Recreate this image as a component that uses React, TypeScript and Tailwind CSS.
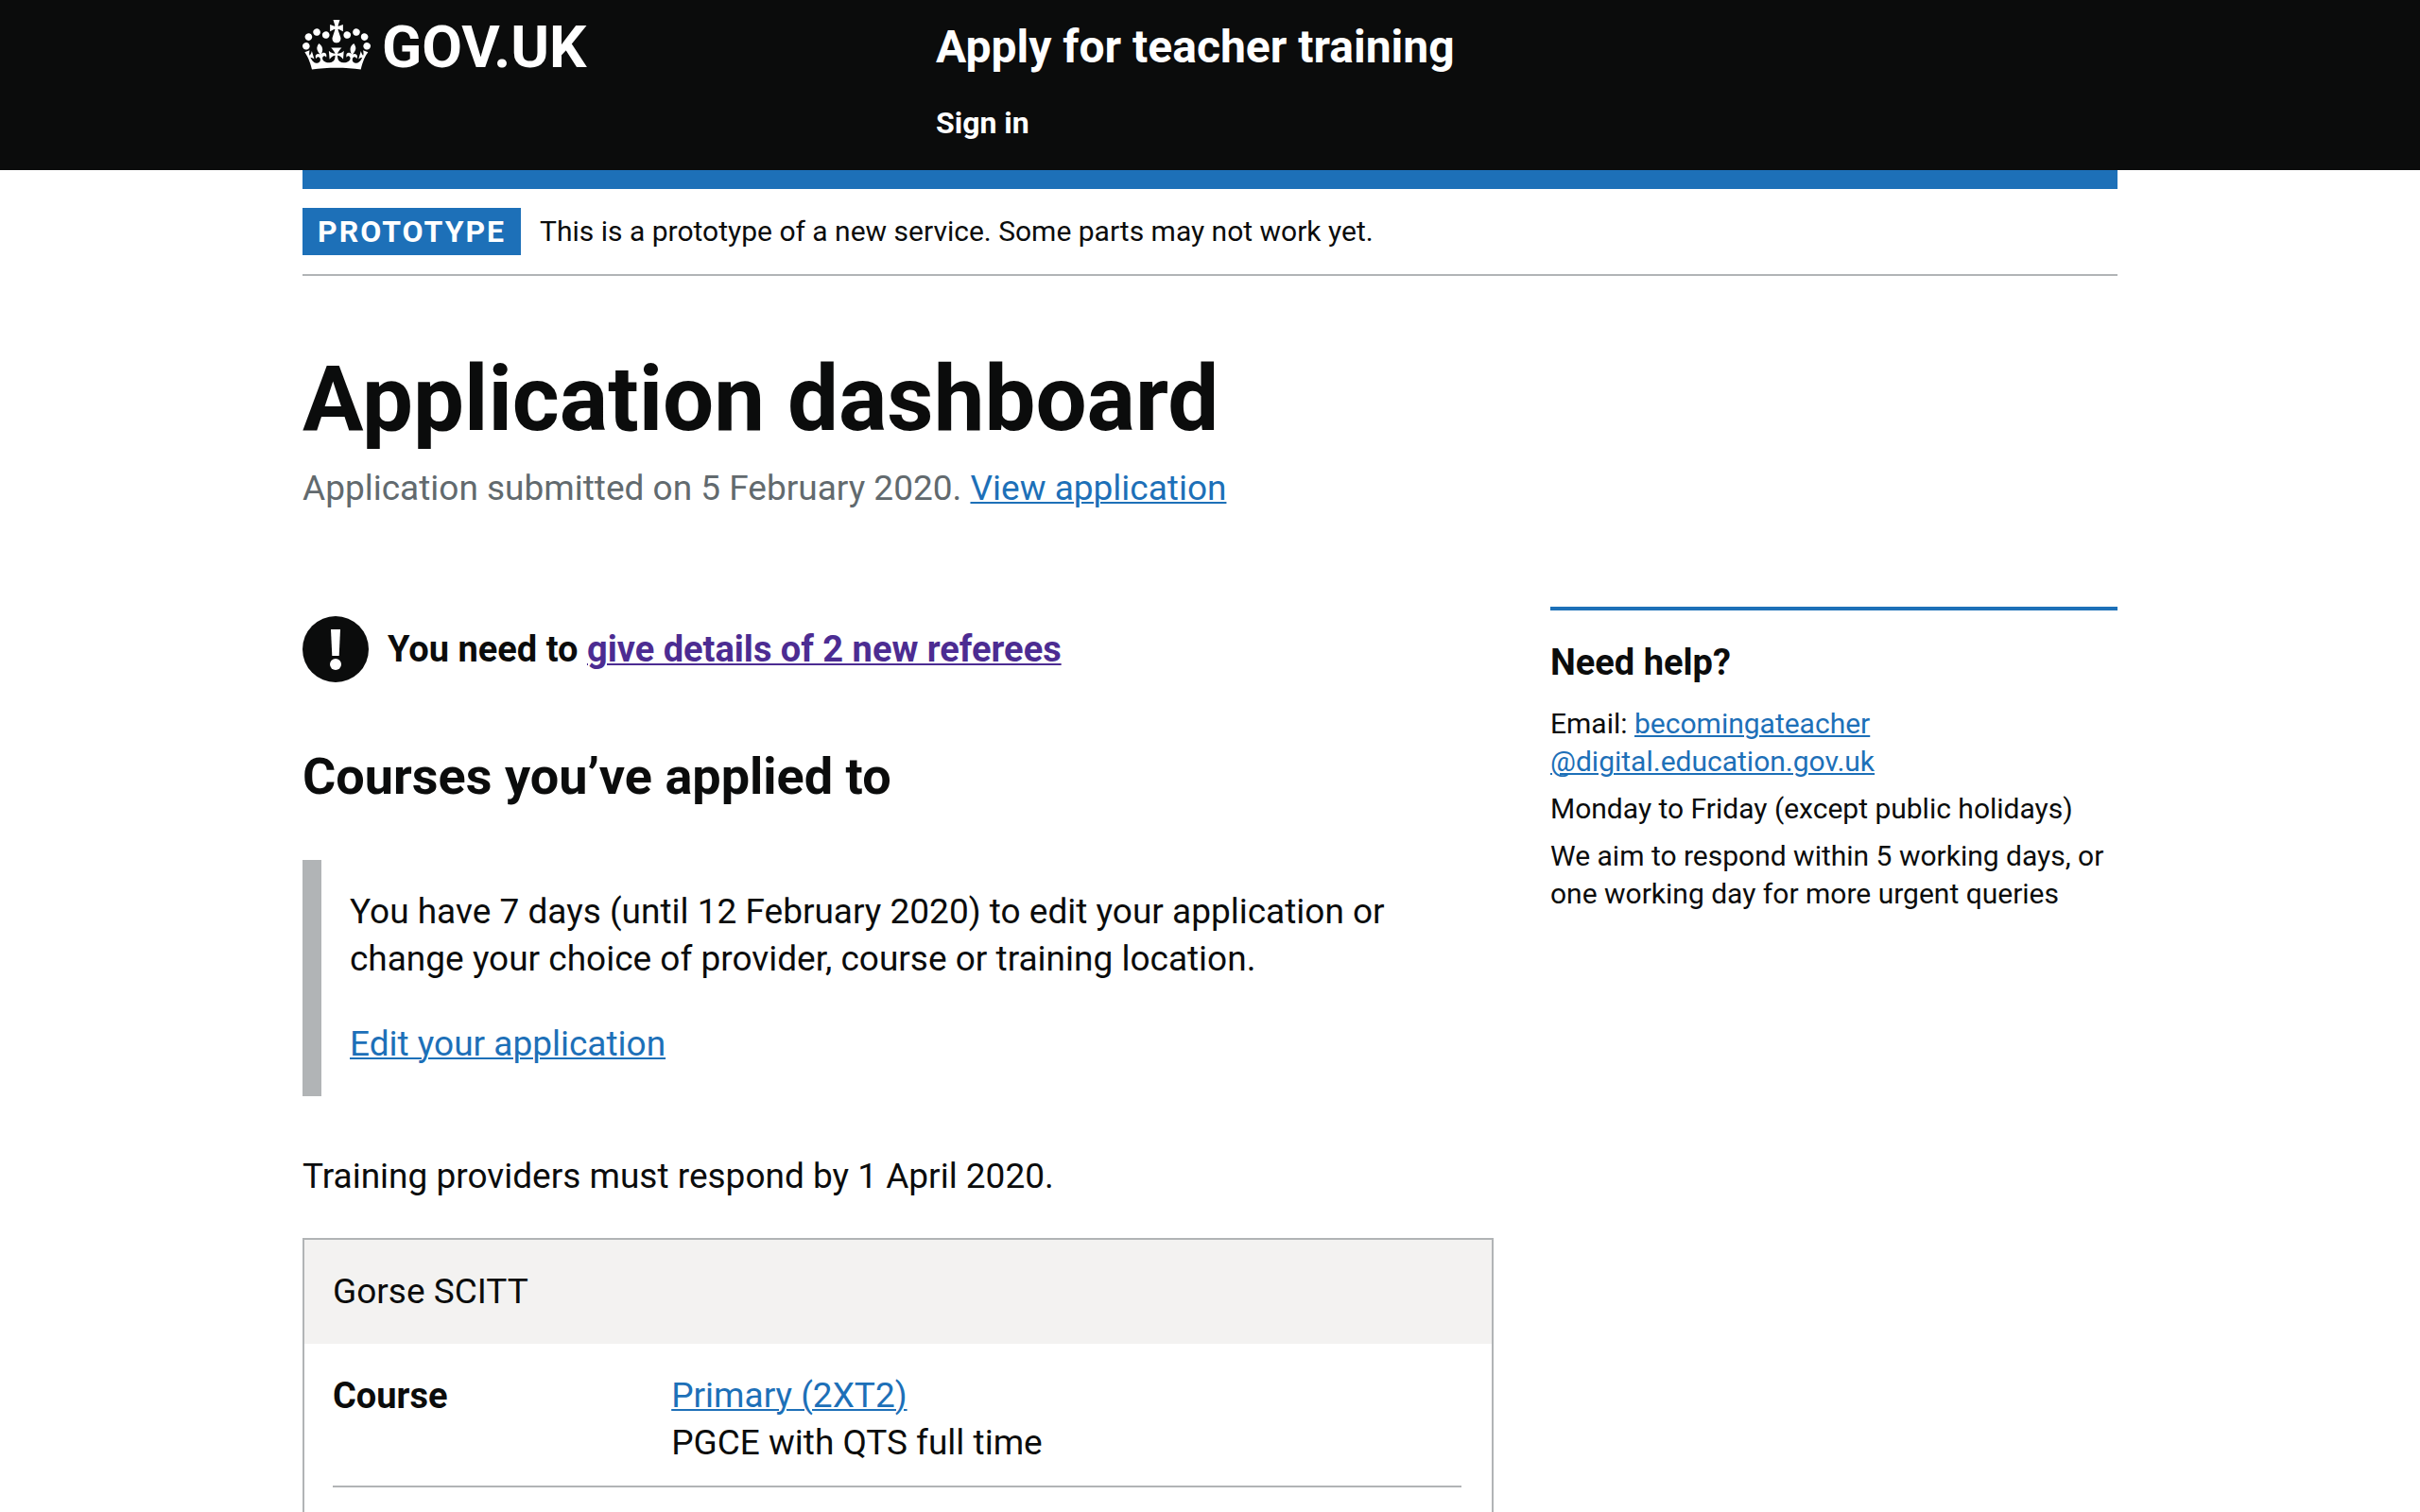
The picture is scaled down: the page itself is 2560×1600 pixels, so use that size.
import type { ReactNode } from 'react'

const linkClass =
  'text-[#1d70b8] underline decoration-2 underline-offset-2 hover:text-[#003078]'

function Crown() {
  return (
    <svg viewBox="0 0 132 97" className="w-[72px] h-[53px] mt-px shrink-0" fill="currentColor" aria-hidden="true">
      <path d="M25 30.2c3.5 1.5 7.7-.2 9.1-3.7 1.5-3.6-.2-7.8-3.9-9.2-3.6-1.4-7.6.3-9.1 3.9-1.4 3.5.3 7.5 3.9 9zM9 39.5c3.6 1.5 7.8-.2 9.2-3.7 1.5-3.6-.2-7.8-3.9-9.1-3.6-1.5-7.6.2-9.1 3.8-1.4 3.5.3 7.5 3.8 9zM4.4 57.2c3.5 1.5 7.7-.2 9.1-3.8 1.5-3.6-.2-7.7-3.9-9.1-3.5-1.5-7.6.3-9.1 3.8-1.4 3.5.3 7.6 3.9 9.1zm38.3-21.4c3.5 1.5 7.7-.2 9.1-3.8 1.5-3.6-.2-7.7-3.9-9.1-3.6-1.5-7.6.3-9.1 3.8-1.3 3.6.4 7.7 3.9 9.1zm64.4-5.6c-3.6 1.5-7.8-.2-9.1-3.7-1.5-3.6.2-7.8 3.8-9.2 3.6-1.4 7.7.3 9.2 3.9 1.3 3.5-.4 7.5-3.9 9zm15.9 9.3c-3.6 1.5-7.7-.2-9.1-3.7-1.5-3.6.2-7.8 3.7-9.1 3.6-1.5 7.7.2 9.2 3.8 1.5 3.5-.3 7.5-3.8 9zm4.7 17.7c-3.6 1.5-7.8-.2-9.2-3.8-1.5-3.6.2-7.7 3.9-9.1 3.6-1.5 7.7.3 9.2 3.8 1.3 3.5-.4 7.6-3.9 9.1zM89.3 35.8c-3.6 1.5-7.8-.2-9.2-3.8-1.4-3.6.2-7.7 3.9-9.1 3.6-1.5 7.7.3 9.2 3.8 1.4 3.6-.3 7.7-3.9 9.1zM69.7 17.7l8.9 4.7V9.3l-8.9 2.8c-.2-.3-.5-.6-.9-.9L72.4 0H59.6l3.5 11.2c-.3.3-.6.5-.9.9l-8.8-2.8v13.1l8.8-4.7c.3.3.6.7.9.9l-5 15.4v.1c-.2.8-.4 1.6-.4 2.4 0 4.1 3.1 7.5 7 8.1h.2c.3 0 .7.1 1 .1.4 0 .7 0 1-.1h.2c4-.6 7.1-4.1 7.1-8.1 0-.8-.1-1.7-.4-2.4V34l-5.1-15.4c.4-.2.7-.6 1-.9zM66 92.8c16.9 0 32.8 1.1 47.1 3.2 4-16.9 8.9-26.7 14-33.5l-9.6-3.4c1 4.9 1.1 7.2 0 10.2-1.5-1.4-3-4.3-4.2-8.7L108.6 76c2.8-2 5-3.2 7.5-3.3-4.4 9.4-10 11.9-13.6 11.2-4.3-.8-6.3-4.6-5.6-7.9 1-4.7 5.7-5.9 8-.5 4.3-8.7-3-11.4-7.6-8.8 7.1-7.2 7.9-13.5 2.1-21.1-8 6.1-8.1 12.3-4.5 20.8-4.7-5.4-12.1-2.5-9.5 6.2 3.4-5.2 7.9-2 7.2 3.1-.6 4.3-6.4 7.8-13.5 7.2-10.3-.9-10.9-8-11.2-13.8 2.5-.5 7.1 1.8 11 7.3L80.2 60c-4.1 4.4-8 5.3-12.3 5.4 1.4-4.4 8-11.6 8-11.6H55.5s6.4 7.2 7.9 11.6c-4.2-.1-8-1-12.3-5.4l1.4 16.4c3.9-5.5 8.5-7.7 10.9-7.3-.3 5.8-.9 12.8-11.1 13.8-7.2.6-12.9-2.9-13.5-7.2-.7-5 3.8-8.3 7.1-3.1 2.7-8.7-4.6-11.6-9.4-6.2 3.7-8.5 3.6-14.7-4.6-20.8-5.8 7.6-5 13.9 2.2 21.1-4.7-2.6-11.9.1-7.7 8.8 2.3-5.5 7.1-4.2 8.1.5.7 3.3-1.3 7.1-5.7 7.9-3.5.7-9-1.8-13.5-11.2 2.5.1 4.7 1.3 7.5 3.3l-4.7-15.4c-1.2 4.4-2.7 7.2-4.3 8.7-1.1-3-.9-5.3 0-10.2l-9.5 3.4c5 6.9 9.9 16.7 14 33.5 14.8-2.1 30.8-3.2 47.7-3.2z" />
    </svg>
  )
}

function WarningIcon() {
  return (
    <svg viewBox="0 0 70 70" className="size-[70px] shrink-0" role="img" aria-label="Warning">
      <circle cx="35" cy="35" r="35" fill="#0b0c0c" />
      <path d="M30 14h10l-1.3 28h-7.4z" fill="#fff" />
      <circle cx="35" cy="51" r="6" fill="#fff" />
    </svg>
  )
}

function Container({ children, className = '' }: { children: ReactNode; className?: string }) {
  return <div className={`w-3/4 max-w-[1920px] mx-auto ${className}`}>{children}</div>
}

function Header() {
  return (
    <header className="bg-[#0b0c0c] text-white font-bold">
      <Container className="flex gap-[30px] pt-5 pb-[30px]">
        <div className="w-1/3 shrink-0">
          <a href="#" className="inline-flex items-start gap-3">
            <Crown />
            <span className="text-[62px] leading-[60px]">GOV.UK</span>
          </a>
        </div>
        <div>
          <a href="#" className="block text-[48px] leading-[60px]">
            Apply for teacher training
          </a>
          <nav className="mt-[30px]">
            <a href="#" className="block text-[32px] leading-[40px]">
              Sign in
            </a>
          </nav>
        </div>
      </Container>
    </header>
  )
}

function PhaseBanner() {
  return (
    <div className="flex items-center gap-5 border-t-[20px] border-t-[#1d70b8] border-b-2 border-b-[#b1b4b6] py-5 leading-[40px]">
      <strong className="bg-[#1d70b8] text-white text-[32px] font-bold uppercase tracking-[2px] px-4 py-[5px]">
        Prototype
      </strong>
      <span className="text-[30px]">
        This is a prototype of a new service. Some parts may not work yet.
      </span>
    </div>
  )
}

function Help() {
  return (
    <aside className="border-t-4 border-[#1d70b8] pt-[30px] text-[30px] leading-[40px]">
      <h2 className="text-[38px] leading-[50px] font-bold mb-5">Need help?</h2>
      <p className="mb-[10px]">
        Email:{' '}
        <a href="#" className={linkClass}>
          becomingateacher
          <wbr />
          @digital.education.gov.uk
        </a>
      </p>
      <p className="mb-[10px]">Monday to Friday (except public holidays)</p>
      <p>We aim to respond within 5 working days, or one working day for more urgent queries</p>
    </aside>
  )
}

function CourseCard() {
  return (
    <section className="border-2 border-b-0 border-[#b1b4b6] pb-[26px]">
      <h3 className="bg-[#f3f2f1] p-[30px]">Gorse SCITT</h3>
      <dl className="ml-[30px] mr-8 mt-[30px]">
        <div className="flex border-b-2 border-[#b1b4b6] pb-5">
          <dt className="w-[30%] shrink-0 text-[38px] font-bold">Course</dt>
          <dd>
            <a href="#" className={linkClass}>
              Primary (2XT2)
            </a>
            <br />
            PGCE with QTS full time
          </dd>
        </div>
      </dl>
    </section>
  )
}

export default function App() {
  return (
    <div className="bg-white text-[#0b0c0c] font-['Roboto',sans-serif] text-[37px] leading-[50px]">
      <Header />
      <Container>
        <PhaseBanner />
        <main className="pt-20">
          <h1 className="text-[96px] leading-[100px] font-bold mb-5">Application dashboard</h1>
          <p className="text-[#626a6e]">
            Application submitted on 5 February 2020.{' '}
            <a href="#" className={linkClass}>
              View application
            </a>
          </p>
          <div className="flex items-start mt-[100px] -mx-[30px]">
            <div className="w-2/3 px-[30px] pt-[10px]">
              <div className="flex items-center gap-5">
                <WarningIcon />
                <strong className="text-[38px] font-bold">
                  You need to{' '}
                  <a href="#" className="text-[#4c2c92] underline decoration-2 underline-offset-2">
                    give details of 2 new referees
                  </a>
                </strong>
              </div>
              <h2 className="text-[54px] leading-[60px] font-bold mt-[70px] mb-[58px]">
                Courses you’ve applied to
              </h2>
              <div className="border-l-[20px] border-[#b1b4b6] p-[30px]">
                <p className="mb-10">
                  You have 7 days (until 12 February 2020) to edit your application or change your
                  choice of provider, course or training location.
                </p>
                <a href="#" className={linkClass}>
                  Edit your application
                </a>
              </div>
              <p className="mt-[60px] mb-10">Training providers must respond by 1 April 2020.</p>
              <CourseCard />
            </div>
            <div className="w-1/3 px-[30px]">
              <Help />
            </div>
          </div>
        </main>
      </Container>
    </div>
  )
}
